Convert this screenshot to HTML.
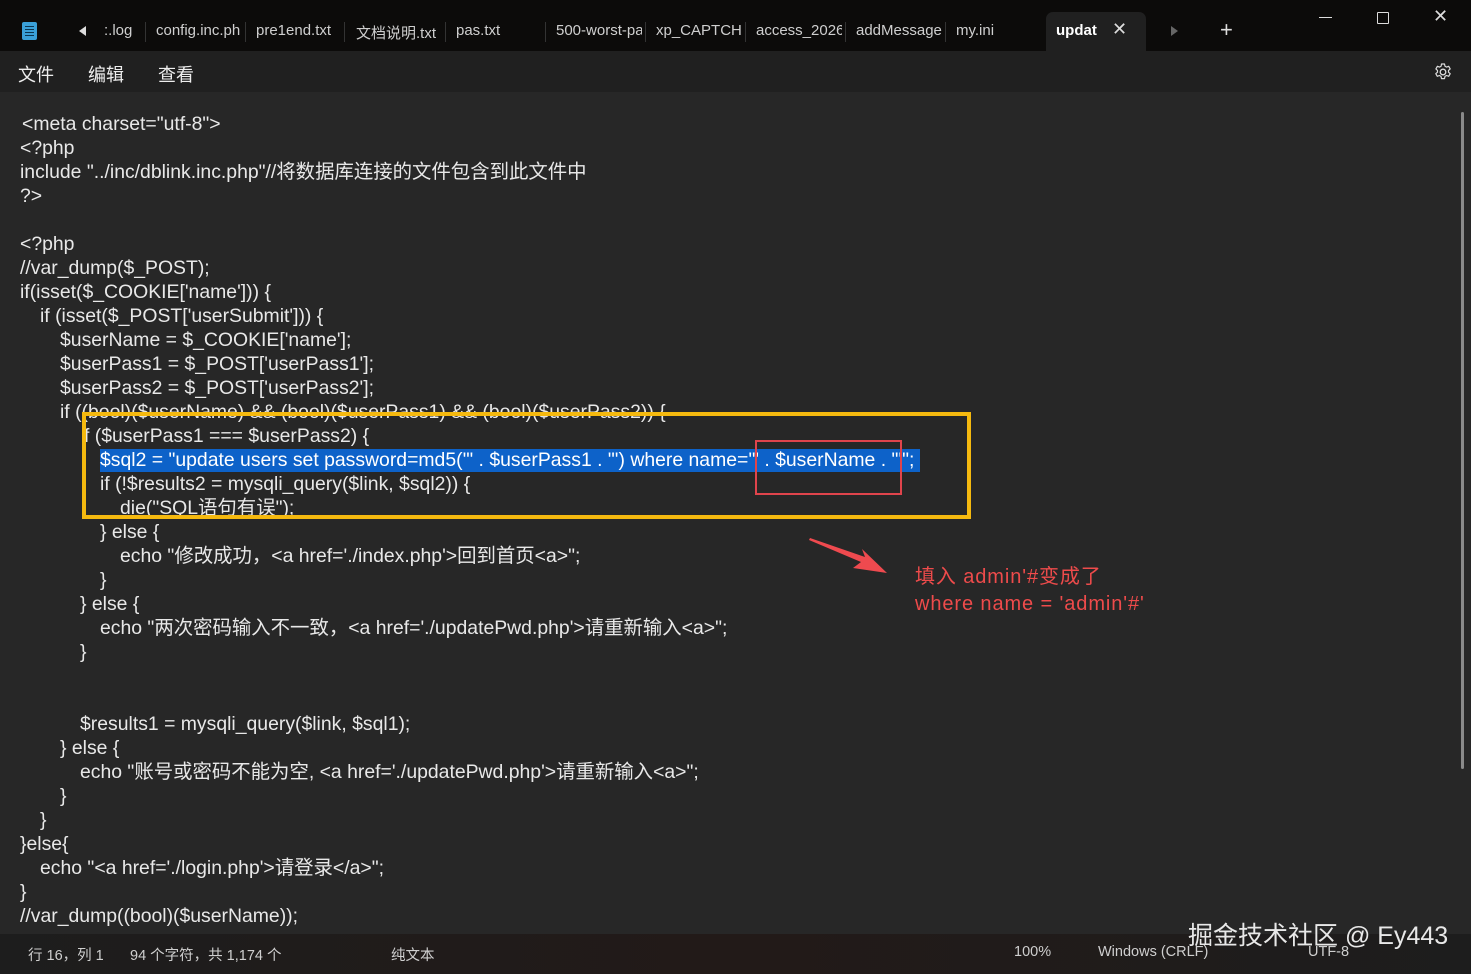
<!DOCTYPE html>
<html><head><meta charset="utf-8"><style>
*{margin:0;padding:0;box-sizing:border-box}
body{width:1471px;height:974px;overflow:hidden;background:#272727;font-family:"Liberation Sans","Noto Sans CJK SC",sans-serif;color:#e6e6e6;position:relative}
#title{position:absolute;left:0;top:0;width:1471px;height:51px;background:#0c0b0a}
.tab{position:absolute;top:22px;font-size:15px;color:#cfcfcf;white-space:nowrap}
.sep{position:absolute;top:22px;width:1px;height:20px;background:#333}
#menu{position:absolute;left:0;top:51px;width:1471px;height:41px;background:#202020}
#menu span{position:absolute;top:10px;font-size:18px;color:#eee}
.l{position:absolute;font-size:19.4px;line-height:24px;white-space:pre;color:#e8e8e8}
#status{position:absolute;left:0;top:934px;width:1471px;height:40px;background:linear-gradient(90deg,#1d1d1d,#221a18 50%,#1d1d1d);font-size:14.5px;color:#cfcfcf}
#status span{position:absolute;top:10px}
</style></head><body>
<div id="title">
<div style="position:absolute;left:22px;top:22px;width:15px;height:18px;background:#3aa0d8;border-radius:2px"><div style="margin:4px 3px;height:1px;background:#0b3550;box-shadow:0 3px 0 #0b3550,0 6px 0 #0b3550,0 9px 0 #0b3550"></div></div>
<div style="position:absolute;left:79px;top:26px;width:0;height:0;border-top:5px solid transparent;border-bottom:5px solid transparent;border-right:7px solid #ddd"></div>
<div class="tab" style="left:104px">:.log</div><div class="sep" style="left:145px"></div>
<div class="tab" style="left:156px">config.inc.ph</div><div class="sep" style="left:245px"></div>
<div class="tab" style="left:256px">pre1end.txt</div><div class="sep" style="left:344px"></div>
<div class="tab" style="left:356px">文档说明.txt</div><div class="sep" style="left:445px"></div>
<div class="tab" style="left:456px">pas.txt</div><div class="sep" style="left:545px"></div>
<div class="tab" style="left:556px;width:86px;overflow:hidden">500-worst-pa</div><div class="sep" style="left:645px"></div>
<div class="tab" style="left:656px;width:86px;overflow:hidden">xp_CAPTCHA</div><div class="sep" style="left:745px"></div>
<div class="tab" style="left:756px;width:86px;overflow:hidden">access_2026(</div><div class="sep" style="left:845px"></div>
<div class="tab" style="left:856px">addMessage</div><div class="sep" style="left:945px"></div>
<div class="tab" style="left:956px">my.ini</div>
<div style="position:absolute;left:1046px;top:12px;width:100px;height:39px;background:#202020;border-radius:7px 7px 0 0"></div>
<div class="tab" style="left:1056px;color:#fff;font-weight:bold">updat</div>
<div class="tab" style="left:1112px;top:19px;font-size:18px;color:#ddd">✕</div>
<div style="position:absolute;left:1171px;top:26px;border-top:5px solid transparent;border-bottom:5px solid transparent;border-left:7px solid #666"></div>
<div class="tab" style="left:1220px;top:17px;font-size:22px;color:#ddd">+</div>
<div style="position:absolute;left:1319px;top:17px;width:13px;height:1px;background:#ddd"></div>
<div style="position:absolute;left:1377px;top:12px;width:12px;height:12px;border:1.5px solid #ddd;border-radius:1px"></div>
<div class="tab" style="left:1433px;top:6px;font-size:18px;color:#ddd">✕</div>
</div>
<div id="menu"><span style="left:18px">文件</span><span style="left:88px">编辑</span><span style="left:158px">查看</span>
<svg style="position:absolute;left:1433px;top:11px" width="20" height="20" viewBox="0 0 20 20"><circle cx="10" cy="10" r="2.8" fill="none" stroke="#ddd" stroke-width="1.3"/><path d="M8.5 2h3l.5 2.2 1.6.9 2.1-.8 1.5 2.6-1.7 1.5v1.8l1.7 1.5-1.5 2.6-2.1-.8-1.6.9-.5 2.2h-3l-.5-2.2-1.6-.9-2.1.8-1.5-2.6 1.7-1.5V8.4L2.9 6.9l1.5-2.6 2.1.8 1.6-.9z" fill="none" stroke="#ddd" stroke-width="1.2" stroke-linejoin="round"/></svg></div>
<div style="position:absolute;left:1461px;top:112px;width:3px;height:657px;background:#8a8a8a;border-radius:2px"></div>
<div style="position:absolute;left:100px;top:449px;width:820px;height:23px;background:#0d62c9"></div>
<div class="l" style="left:22px;top:112px">&lt;meta charset="utf-8"&gt;</div>
<div class="l" style="left:20px;top:136px">&lt;?php</div>
<div class="l" style="left:20px;top:160px">include "../inc/dblink.inc.php"//将数据库连接的文件包含到此文件中</div>
<div class="l" style="left:20px;top:184px">?&gt;</div>
<div class="l" style="left:20px;top:232px">&lt;?php</div>
<div class="l" style="left:20px;top:256px">//var_dump($_POST);</div>
<div class="l" style="left:20px;top:280px">if(isset($_COOKIE['name'])) {</div>
<div class="l" style="left:40px;top:304px">if (isset($_POST['userSubmit'])) {</div>
<div class="l" style="left:60px;top:328px">$userName = $_COOKIE['name'];</div>
<div class="l" style="left:60px;top:352px">$userPass1 = $_POST['userPass1'];</div>
<div class="l" style="left:60px;top:376px">$userPass2 = $_POST['userPass2'];</div>
<div class="l" style="left:60px;top:400px">if ((bool)($userName) &amp;&amp; (bool)($userPass1) &amp;&amp; (bool)($userPass2)) {</div>
<div class="l" style="left:84px;top:424px">f ($userPass1 === $userPass2) {</div>
<div class="l" style="left:100px;top:448px;color:#fff">$sql2 = "update users set password=md5('" . $userPass1 . "') where name='" . $userName . "'";</div>
<div class="l" style="left:100px;top:472px">if (!$results2 = mysqli_query($link, $sql2)) {</div>
<div class="l" style="left:120px;top:496px">die("SQL语句有误");</div>
<div class="l" style="left:100px;top:520px">} else {</div>
<div class="l" style="left:120px;top:544px">echo "修改成功，&lt;a href='./index.php'&gt;回到首页&lt;a&gt;";</div>
<div class="l" style="left:100px;top:568px">}</div>
<div class="l" style="left:80px;top:592px">} else {</div>
<div class="l" style="left:100px;top:616px">echo "两次密码输入不一致，&lt;a href='./updatePwd.php'&gt;请重新输入&lt;a&gt;";</div>
<div class="l" style="left:80px;top:640px">}</div>
<div class="l" style="left:80px;top:712px">$results1 = mysqli_query($link, $sql1);</div>
<div class="l" style="left:60px;top:736px">} else {</div>
<div class="l" style="left:80px;top:760px">echo "账号或密码不能为空, &lt;a href='./updatePwd.php'&gt;请重新输入&lt;a&gt;";</div>
<div class="l" style="left:60px;top:784px">}</div>
<div class="l" style="left:40px;top:808px">}</div>
<div class="l" style="left:20px;top:832px">}else{</div>
<div class="l" style="left:40px;top:856px">echo "&lt;a href='./login.php'&gt;请登录&lt;/a&gt;";</div>
<div class="l" style="left:20px;top:880px">}</div>
<div class="l" style="left:20px;top:904px">//var_dump((bool)($userName));</div>
<div style="position:absolute;left:82px;top:412px;width:889px;height:107px;border:4px solid #f5b90f"></div>
<div style="position:absolute;left:755px;top:440px;width:147px;height:55px;border:2px solid #e0444c"></div>
<svg style="position:absolute;left:805px;top:535px" width="90" height="45"><path d="M5 3 L60 22 L57 14 L82 38 L48 33 L56 27 L4 5 Z" fill="#ef4a4f"/></svg>
<div style="position:absolute;left:915px;top:564px;font-size:20px;letter-spacing:0.9px;line-height:27px;color:#ee4b4b;white-space:nowrap">填入 admin'#变成了<br>where name = 'admin'#'</div>
<div id="status"><span style="left:28px">行 16，列 1</span><span style="left:130px">94 个字符，共 1,174 个</span><span style="left:391px">纯文本</span><span style="left:1014px">100%</span><span style="left:1098px">Windows (CRLF)</span><span style="left:1308px">UTF-8</span></div>
<div style="position:absolute;left:1188px;top:916px;font-size:25px;color:#e8e8e8;white-space:nowrap">掘金技术社区 @ Ey443</div>
</body></html>
